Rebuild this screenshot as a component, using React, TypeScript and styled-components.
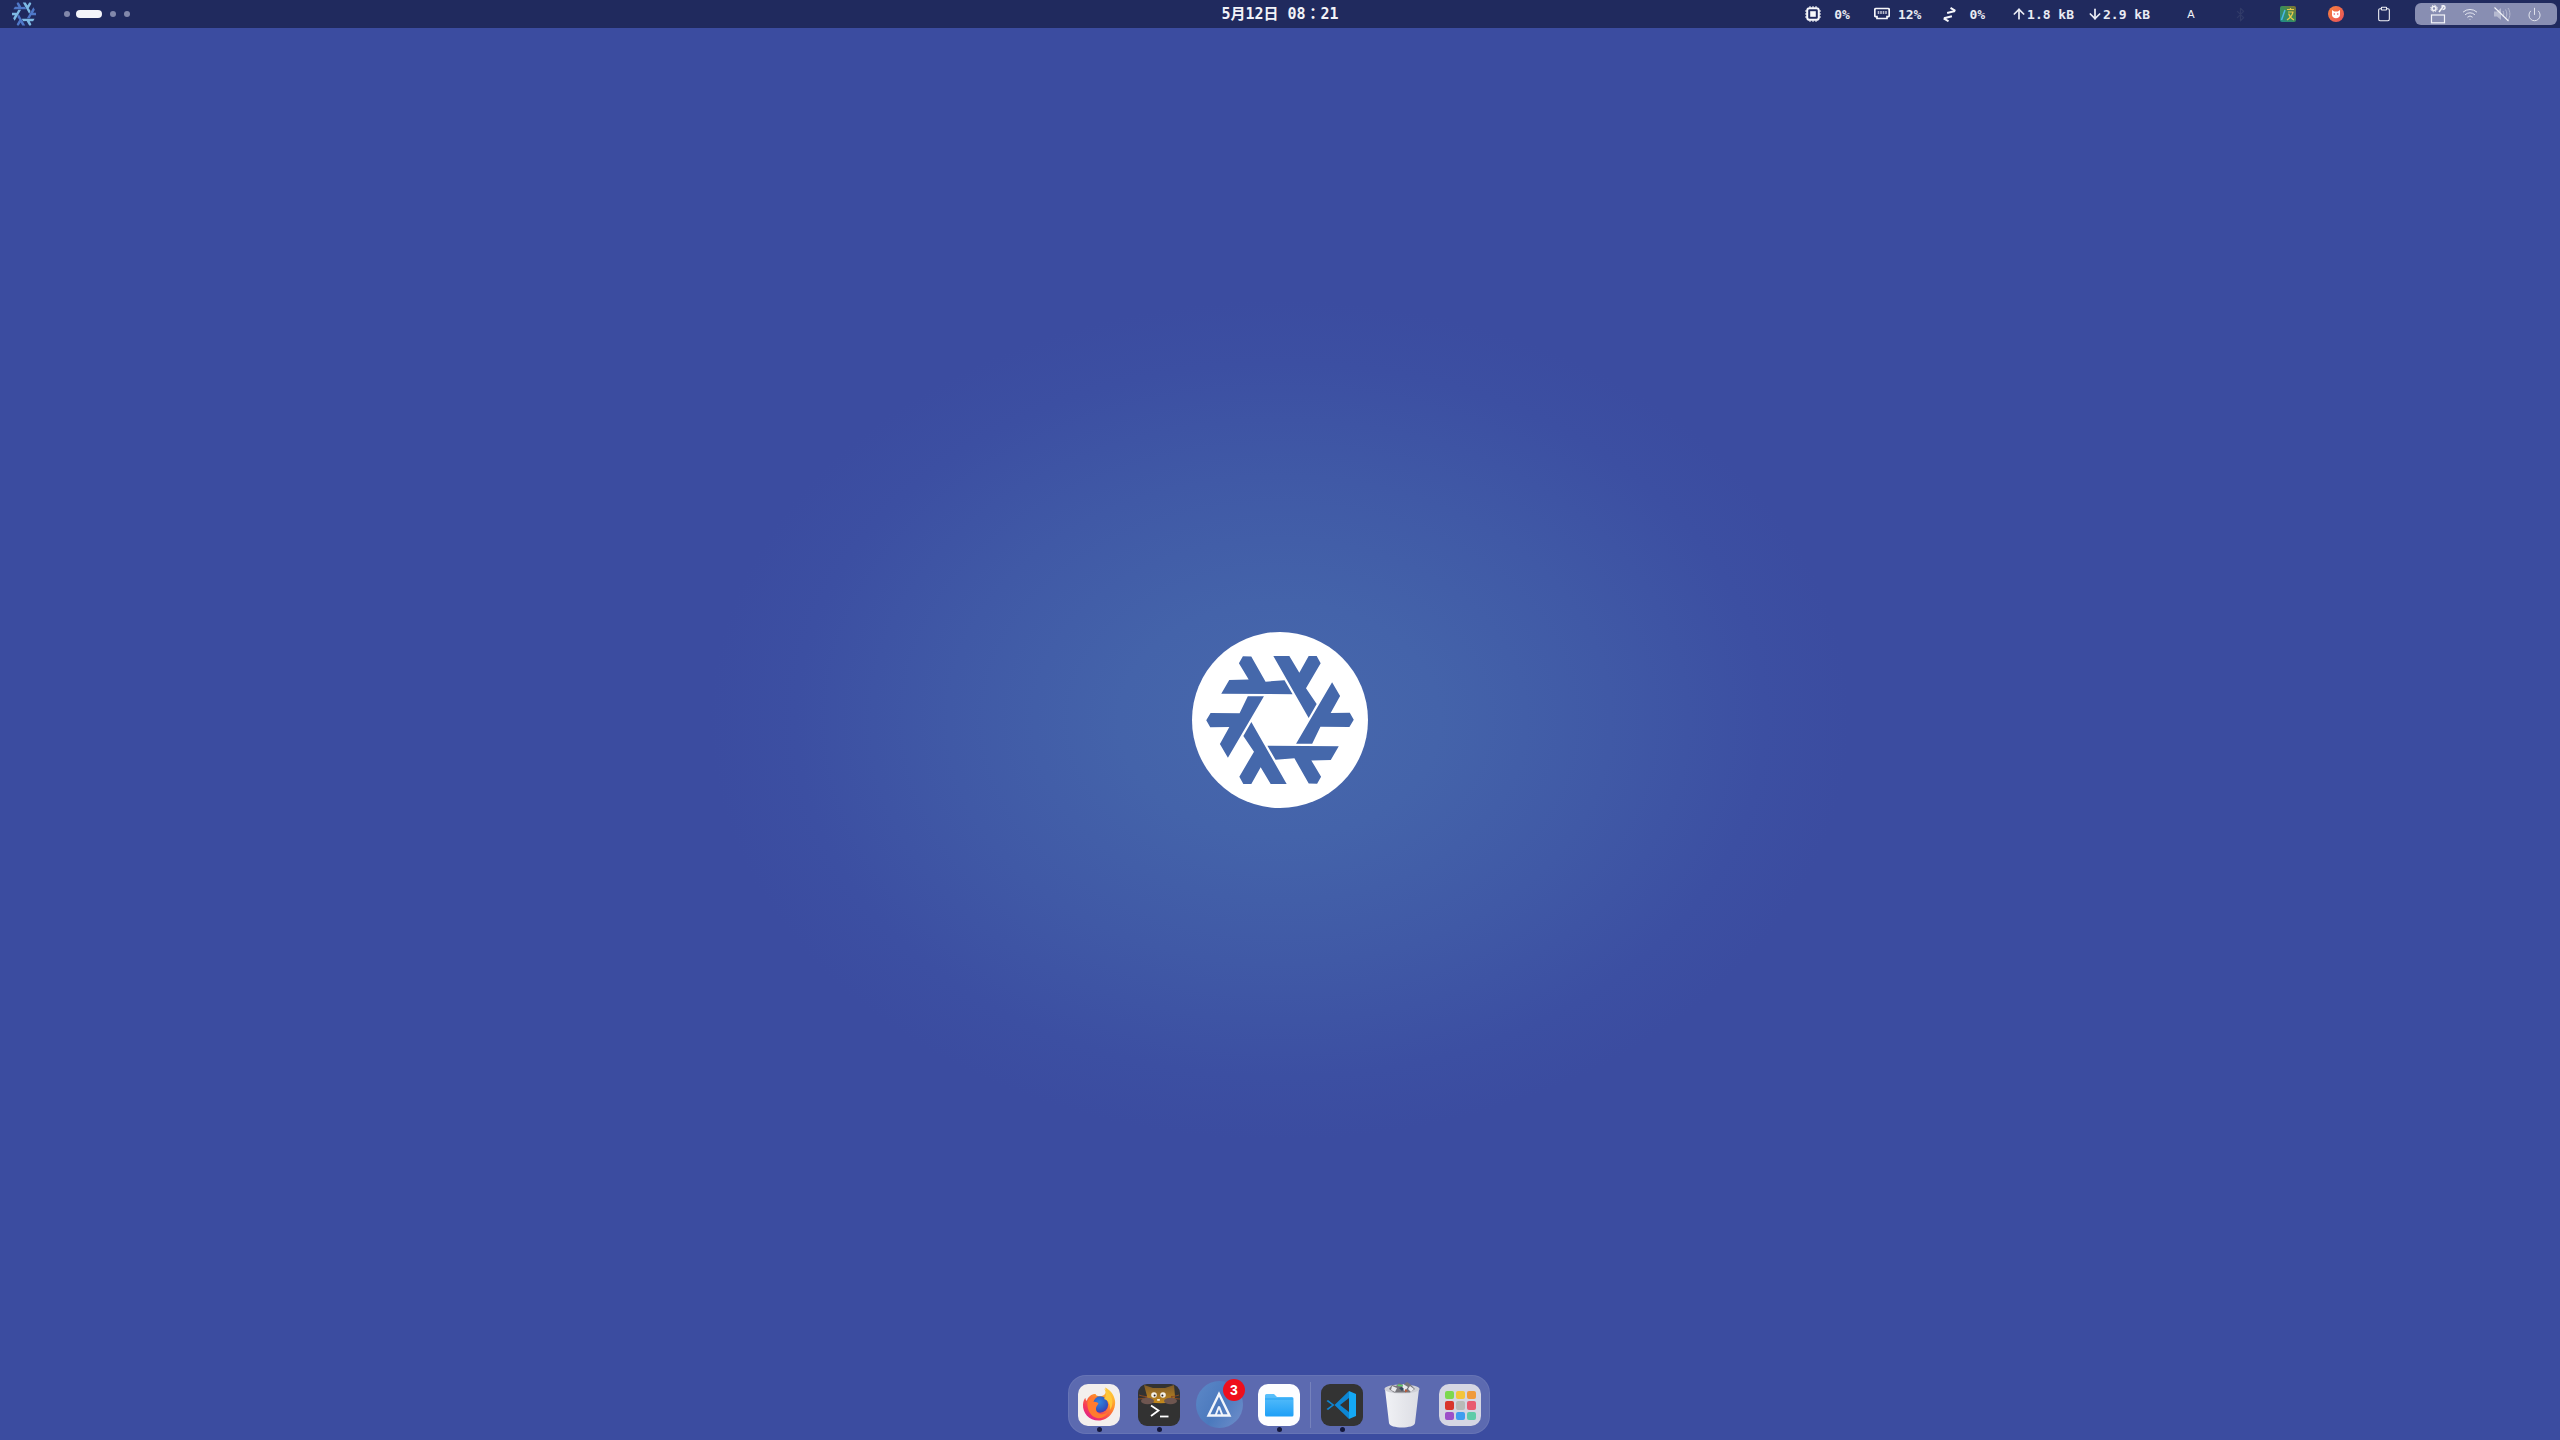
// App.tsx
import styled, { createGlobalStyle } from "styled-components";
import { ArrowDown, ArrowUp, Bluetooth, Clipboard, Power, Wifi } from "lucide-react";

/* --------------------------------------------------------
   SHARED SHAPES
-------------------------------------------------------- */
const LAMBDA =
  "-20,-192 28,-192 58,-142 86,-192 110,-192 122,-170 78,-95 110,-48 86,-6";
const ANGLES = [0, 60, 120, 180, 240, 300];

function Snowflake({ fill }: { fill: string }) {
  return (
    <>
      {ANGLES.map((a) => (
        <polygon key={a} points={LAMBDA} fill={fill} transform={`rotate(${a})`} />
      ))}
    </>
  );
}

/* --------------------------------------------------------
   STYLES
-------------------------------------------------------- */
const GlobalStyle = createGlobalStyle`
  html, body { margin: 0; padding: 0; height: 100%; overflow: hidden; }
  #root { height: 100%; }
`;

const Desktop = styled.div`
  width: 2560px;
  height: 1440px;
  display: flex;
  flex-direction: column;
  background:
    radial-gradient(ellipse 570px 420px at 50% 50%, #4768ac 0%, #4463aa 28%, #4059a6 58%, #3c4fa2 85%, #3b4ca0 100%),
    #3b4ca0;
  font-family: "DejaVu Sans Mono", "Liberation Mono", "Noto Sans CJK JP", monospace;
`;

const TopBar = styled.header`
  height: 28px;
  flex: none;
  display: grid;
  grid-template-columns: 1fr auto 1fr;
  align-items: center;
  background: #202a5e;
  color: #f2f3f8;
`;

const LeftGroup = styled.div`
  display: flex;
  align-items: center;
  padding-left: 12px;
`;

const Workspaces = styled.div`
  display: flex;
  align-items: center;
  gap: 7px;
  margin-left: 27px;
`;

const Workspace = styled.span<{ $active?: boolean }>`
  width: ${(p) => (p.$active ? "26px" : "6px")};
  height: ${(p) => (p.$active ? "8px" : "6px")};
  border-radius: 4px;
  background: ${(p) => (p.$active ? "#f4f5fa" : "#8288ab")};
  margin: ${(p) => (p.$active ? "0 0 0 -1px" : "0 0 0 1px")};
`;

const Clock = styled.div`
  font-size: 15px;
  font-weight: 700;
  white-space: nowrap;
  margin-top: -3px;
`;

const RightGroup = styled.div`
  display: flex;
  align-items: center;
  justify-content: flex-end;
  padding-right: 3px;
`;

const Stat = styled.div<{ $gap: number; $after: number }>`
  display: flex;
  align-items: center;
  gap: ${(p) => p.$gap}px;
  margin-right: ${(p) => p.$after}px;
  font-size: 13px;
  font-weight: 700;
  white-space: nowrap;
  color: #e9ebf3;
`;

const Tray = styled.div<{ $width: number; $dim?: boolean }>`
  width: ${(p) => p.$width}px;
  height: 28px;
  display: flex;
  align-items: center;
  justify-content: center;
  font-family: "Liberation Sans", sans-serif;
  font-size: 11px;
  font-weight: 400;
  color: ${(p) => (p.$dim ? "#303a68" : "#f2f3f8")};
`;

const QuickPill = styled.div`
  width: 142px;
  height: 22px;
  box-sizing: border-box;
  padding-left: 7px;
  display: grid;
  grid-template-columns: repeat(4, 32px);
  justify-items: center;
  align-items: center;
  border-radius: 6px;
  background: #888eb2;
  color: #eceef5;
`;

const Main = styled.main`
  flex: 1;
  min-height: 0;
  display: flex;
  align-items: center;
  justify-content: center;
  padding-top: 37px;
`;

const LogoSvg = styled.svg`
  width: 176px;
  height: 176px;
  display: block;
`;

const DockRow = styled.footer`
  flex: none;
  display: flex;
  justify-content: center;
  padding: 0 2px 6px 0;
`;

const Dock = styled.nav`
  height: 59px;
  box-sizing: border-box;
  display: flex;
  align-items: center;
  border-radius: 18px;
  background: rgba(255, 255, 255, 0.17);
  border: 1px solid rgba(255, 255, 255, 0.07);
`;

const Slot = styled.div<{ $width?: number }>`
  position: relative;
  width: ${(p) => p.$width ?? 60}px;
  height: 100%;
  display: flex;
  align-items: center;
  justify-content: center;
`;

const RunDot = styled.span`
  position: absolute;
  left: 50%;
  bottom: 1px;
  width: 5px;
  height: 5px;
  margin-left: -2.5px;
  border-radius: 50%;
  background: #14183c;
`;

const Badge = styled.span`
  position: absolute;
  top: 3px;
  right: 4px;
  width: 22px;
  height: 22px;
  display: flex;
  align-items: center;
  justify-content: center;
  border-radius: 50%;
  background: #ee0f1c;
  color: #fff;
  font-family: "Liberation Sans", sans-serif;
  font-size: 14px;
  font-weight: 700;
`;

const Separator = styled.span`
  width: 1px;
  height: 46px;
  margin: 0 1px;
  background: rgba(255, 255, 255, 0.16);
`;

const AppSvg = styled.svg`
  display: block;
`;

const LaunchTile = styled.div`
  width: 42px;
  height: 42px;
  box-sizing: border-box;
  padding: 7px 6px;
  display: grid;
  grid-template-columns: repeat(3, 9px);
  grid-auto-rows: 8.5px;
  gap: 2px;
  justify-content: center;
  border-radius: 10px;
  background: #d5d6e3;
`;

const LaunchCell = styled.span<{ $color: string }>`
  border-radius: 2px;
  background: ${(p) => p.$color};
`;

/* --------------------------------------------------------
   TOP BAR ICONS
-------------------------------------------------------- */
function CpuIcon() {
  return (
    <svg width="16" height="16" viewBox="0 0 16 16" fill="none">
      <rect x="2.2" y="2.2" width="11.6" height="11.6" rx="2.4" stroke="#f6f7fb" strokeWidth="2" />
      <rect x="5.2" y="5.2" width="5.6" height="5.6" fill="#f6f7fb" />
      <path d="M5 0v2M8 0v2M11 0v2M5 14v2M8 14v2M11 14v2M0 5h2M0 8h2M0 11h2M14 5h2M14 8h2M14 11h2" stroke="#f6f7fb" />
    </svg>
  );
}

function MemIcon() {
  return (
    <svg width="16" height="14" viewBox="0 0 16 14" fill="none">
      <path d="M2 1.5h12a1.2 1.2 0 0 1 1.2 1.2v6a1 1 0 0 1-1 1H13v1.8H3V9.7H1.8a1 1 0 0 1-1-1v-6A1.2 1.2 0 0 1 2 1.5z" stroke="#f6f7fb" strokeWidth="1.7" />
      <path d="M4.5 4v3M7 4v3M9.5 4v3M12 4v3" stroke="#f6f7fb" strokeWidth="1.6" opacity="0.7" />
    </svg>
  );
}

function SwapIcon() {
  return (
    <svg width="15" height="15" viewBox="0 0 15 15" fill="none" stroke="#f6f7fb" strokeWidth="2">
      <path d="M5 5.2h8.2M9.5 1.2l4 4" transform="rotate(-14 8 5)" />
      <path d="M10 10H1.8M5.5 14l-4-4" transform="rotate(-14 7 10)" />
    </svg>
  );
}

function TranslateIcon() {
  return (
    <svg width="16" height="16" viewBox="0 0 16 16">
      <defs>
        <linearGradient id="tr" x1="0" y1="1" x2="1" y2="0">
          <stop offset="0" stopColor="#1f8a8c" />
          <stop offset="0.55" stopColor="#3e8c55" />
          <stop offset="1" stopColor="#87702c" />
        </linearGradient>
      </defs>
      <rect width="16" height="16" rx="2" fill="url(#tr)" />
      <path d="M7 3.5h7M10.5 2v1.5M8 6h5.5M13 6c-.8 3.5-3 6-6 8M8.6 7.5c.9 3 2.6 5 5.4 6.5" stroke="#e8c84a" strokeWidth="1.2" fill="none" />
      <path d="M1.5 14l3.5-10" stroke="#4bb8e8" strokeWidth="1.5" />
    </svg>
  );
}

function CatIcon() {
  return (
    <svg width="16" height="16" viewBox="0 0 16 16">
      <defs>
        <linearGradient id="cat" x1="0" y1="0" x2="1" y2="1">
          <stop offset="0" stopColor="#f6823c" />
          <stop offset="1" stopColor="#e8505c" />
        </linearGradient>
      </defs>
      <circle cx="8" cy="8" r="8" fill="url(#cat)" />
      <path d="M4 4l2.2 1.5h3.6L12 4v5c0 2-1.8 3.2-4 3.2S4 11 4 9z" fill="#fff" />
      <circle cx="6.3" cy="8" r="0.8" fill="#e8505c" />
      <circle cx="9.7" cy="8" r="0.8" fill="#e8505c" />
    </svg>
  );
}

function SettingsTrayIcon() {
  return (
    <svg width="16" height="20" viewBox="0 0 16 20" fill="none" stroke="#f2f3f8">
      <circle cx="4" cy="4.5" r="2" strokeWidth="1.6" />
      <circle cx="4" cy="4.5" r="3.3" strokeWidth="1" strokeDasharray="1.3 1.3" />
      <path d="M9 8l4.500-6" strokeWidth="1.500" />
      <path d="M11.500 2.500c1-1.500 3.500-1 3.500 1 0 1.500-1.500 2-2.500 2" strokeWidth="1.400" />
      <rect x="1.500" y="11" width="13" height="7.800" strokeWidth="1.200" />
    </svg>
  );
}

function MutedIcon() {
  return (
    <svg width="18" height="16" viewBox="0 0 18 16" fill="none">
      <path d="M1 5.5h3L8 2v12l-4-3.500H1z" fill="#b6bad0" />
      <path d="M10 5c1 1.800 1 4.200 0 6M12.500 3.500c1.800 2.800 1.800 6.200 0 9M15 2c2.500 3.600 2.500 8.400 0 12" stroke="#b6bad0" strokeWidth="1" />
      <path d="M1.500 1.500L15.500 15" stroke="#f2f3f8" strokeWidth="1.100" />
    </svg>
  );
}

/* --------------------------------------------------------
   DOCK ICONS
-------------------------------------------------------- */
function FirefoxIcon() {
  return (
    <AppSvg width="42" height="42" viewBox="0 0 42 42">
      <defs>
        <linearGradient id="ffBody" x1="0.85" y1="0.05" x2="0.2" y2="0.95">
          <stop offset="0" stopColor="#ffd23a" />
          <stop offset="0.4" stopColor="#ff8a2b" />
          <stop offset="0.8" stopColor="#f5365c" />
          <stop offset="1" stopColor="#e0218a" />
        </linearGradient>
        <radialGradient id="ffGlobe" cx="0.45" cy="0.35" r="0.7">
          <stop offset="0" stopColor="#2f86e0" />
          <stop offset="0.7" stopColor="#2f56c0" />
          <stop offset="1" stopColor="#5a2ca8" />
        </radialGradient>
      </defs>
      <rect width="42" height="42" rx="10" fill="#f3efed" />
      <path d="M27 3.500c4.500 2 9 6.500 10 13 1.300 9.500-6 20-16.500 20C11 36.500 4.500 29 5 20.500c.2-2.800 1-5 2.300-6.800.2 1.500.7 2.600 1.500 3.300C10 12.500 13.500 9.800 18 10c-1 1 .5 1.500 2 2 6 1.500 9.500-3 7-8.500z" fill="url(#ffBody)" />
      <circle cx="22" cy="20.500" r="8.200" fill="url(#ffGlobe)" />
      <path d="M9.500 17c2.500-3 6-4.500 10-4-2 1-3.300 2.500-4 5 1.800-.5 4 .2 5 1.800-2.300 2.200-3.700 5.800-1 8.700 3 3 8.500 2 11-1.500-1.500 5-6.500 8-11.500 7-6-1.200-10.500-7.500-9.500-17z" fill="#ff7b2e" />
      <path d="M26 4.500c4.500 3 8.500 7.500 8.500 13.500 0 3-1 6-2.500 8 .5-4-.5-9.500-6-11 3-3 2.500-7 0-10.500z" fill="#ffc93a" />
    </AppSvg>
  );
}

function TerminalIcon() {
  return (
    <AppSvg width="42" height="42" viewBox="0 0 42 42">
      <defs>
        <linearGradient id="catHead" x1="0" y1="0" x2="0" y2="1">
          <stop offset="0" stopColor="#7c5a2a" />
          <stop offset="1" stopColor="#c68a1c" />
        </linearGradient>
      </defs>
      <rect width="42" height="42" rx="9" fill="#323232" />
      <path d="M6 1l9 3h12l9-3 1 11c0 3-2 6-4 6.500-7 1-13 1-20 0-2-.5-4-3.500-4-6.500z" fill="url(#catHead)" />
      <path d="M1 11c3 1 5 1.500 8 1.500M-1 15c3 0 7-.5 10-1.500M41 11c-3 1-5 1.500-8 1.500M43 15c-3 0-7-.5-10-1.500" stroke="#8a4a22" strokeWidth="1" fill="none" />
      <ellipse cx="9.500" cy="17" rx="6.500" ry="3.200" fill="#6e5650" />
      <ellipse cx="32.500" cy="17" rx="6.500" ry="3.200" fill="#6e5650" />
      <circle cx="16" cy="11" r="2.800" fill="#f5f1e8" />
      <circle cx="25" cy="11" r="2.800" fill="#f5f1e8" />
      <circle cx="16.600" cy="11.500" r="1" fill="#2a2020" />
      <circle cx="24.400" cy="11.500" r="1" fill="#2a2020" />
      <rect x="19" y="15" width="3" height="1.800" rx="0.8" fill="#f5f1e8" />
      <path d="M13 21.500l7.500 5-7.500 5.500" stroke="#fff" strokeWidth="1.800" fill="none" />
      <path d="M22 32.500h8.500" stroke="#fff" strokeWidth="1.800" />
    </AppSvg>
  );
}

function StoreIcon() {
  return (
    <AppSvg width="47" height="47" viewBox="0 0 47 47">
      <defs>
        <linearGradient id="store" x1="0" y1="0.2" x2="1" y2="0.8">
          <stop offset="0" stopColor="#5a86c6" />
          <stop offset="0.5" stopColor="#4b79bd" />
          <stop offset="1" stopColor="#6b8cc9" />
        </linearGradient>
      </defs>
      <circle cx="23.500" cy="23.500" r="23.500" fill="url(#store)" />
      <path d="M23 13L12.500 34.500h21z" fill="none" stroke="#f2f5fb" strokeWidth="2.400" />
      <path d="M23 25.500L19.500 34.500M23 25.500L26.500 34.500" fill="none" stroke="#f2f5fb" strokeWidth="2" />
    </AppSvg>
  );
}

function FilesIcon() {
  return (
    <AppSvg width="42" height="42" viewBox="0 0 42 42">
      <defs>
        <linearGradient id="folder" x1="0" y1="0" x2="0" y2="1">
          <stop offset="0" stopColor="#5cc0fb" />
          <stop offset="1" stopColor="#1e9ff6" />
        </linearGradient>
      </defs>
      <rect width="42" height="42" rx="10" fill="#fdfdff" />
      <path d="M7 11.500a1.500 1.500 0 0 1 1.500-1.500h7.500l3 3h15a1.500 1.500 0 0 1 1.500 1.500V31a1.500 1.500 0 0 1-1.500 1.500H8.500A1.500 1.500 0 0 1 7 31z" fill="url(#folder)" />
      <path d="M7 15h28" stroke="#2ca6f3" strokeWidth="1.200" />
    </AppSvg>
  );
}

function VscodeIcon() {
  return (
    <AppSvg width="42" height="42" viewBox="0 0 42 42">
      <rect width="42" height="42" rx="9" fill="#333333" />
      <path d="M28 7l7 3v22l-7 3z" fill="#14a8f4" />
      <path d="M28 7L13.500 21 7 16l-1.500 1 5.500 4-5.500 4 1.500 1 6.500-5L28 35V28L19 21l9-7z" fill="#0d86d3" />
    </AppSvg>
  );
}

function TrashIcon() {
  return (
    <AppSvg width="36" height="46" viewBox="0 0 36 46">
      <defs>
        <linearGradient id="bin" x1="0" y1="0" x2="1" y2="0">
          <stop offset="0" stopColor="#f1f2f6" />
          <stop offset="0.5" stopColor="#e6e7ec" />
          <stop offset="1" stopColor="#dcdde4" />
        </linearGradient>
      </defs>
      <path d="M1 7l4 34c.3 3 6.500 4.500 13 4.500S30.700 44 31 41l4-34z" fill="url(#bin)" />
      <ellipse cx="18" cy="7" rx="17.500" ry="4.500" fill="#cfd0d7" />
      <path d="M5 7l3-4 4 1 3-3 4 2 4-3 3 2 5 5-5 3.500H10z" fill="#77767b" />
      <path d="M8 4l5 2-2 4-4-2zM19 2l5 3-3 4-3-2zM26 4l4 3-3 3-3-3z" fill="#e8e8ec" />
      <path d="M14 2.500l5 .5-.5 1.500-5-.5z" fill="#5fd06a" />
      <path d="M15 6l3 3 2-2-2-2z" fill="#34495e" />
      <path d="M21 7l3 2-3 1.500z" fill="#b85a3a" />
    </AppSvg>
  );
}

const LAUNCH_COLORS = [
  "#7cd850", "#f3c53c", "#f09a3c",
  "#d8352c", "#b8bbb8", "#e85a70",
  "#9c50c8", "#3f9df0", "#5fcba8",
];

/* --------------------------------------------------------
   PAGE
-------------------------------------------------------- */
export default function App() {
  return (
    <Desktop>
      <GlobalStyle />

      <TopBar>
        <LeftGroup>
          <svg width="24" height="24" viewBox="-200 -200 400 400">
            {ANGLES.map((a, i) => (
              <polygon
                key={a}
                points={LAMBDA}
                fill={i % 2 === 0 ? "#7ebae4" : "#4f78c8"}
                transform={`rotate(${a})`}
              />
            ))}
          </svg>
          <Workspaces>
            <Workspace />
            <Workspace $active />
            <Workspace />
            <Workspace />
          </Workspaces>
        </LeftGroup>

        <Clock>5月12日 08：21</Clock>

        <RightGroup>
          <Stat $gap={13} $after={24}><CpuIcon />0%</Stat>
          <Stat $gap={8} $after={21}><MemIcon />12%</Stat>
          <Stat $gap={12} $after={26}><SwapIcon />0%</Stat>
          <Stat $gap={0} $after={13}><ArrowUp size={16} strokeWidth={2.6} />1.8 kB</Stat>
          <Stat $gap={0} $after={16}><ArrowDown size={16} strokeWidth={2.6} />2.9 kB</Stat>
          <Tray $width={50}>A</Tray>
          <Tray $width={48} $dim><Bluetooth size={15} /></Tray>
          <Tray $width={48}><TranslateIcon /></Tray>
          <Tray $width={48}><CatIcon /></Tray>
          <Tray $width={48}><Clipboard size={16} strokeWidth={1.6} /></Tray>
          <Tray $width={7} />
          <QuickPill>
            <SettingsTrayIcon />
            <Wifi size={16} strokeWidth={1.4} />
            <MutedIcon />
            <Power size={15} strokeWidth={1.4} />
          </QuickPill>
        </RightGroup>
      </TopBar>

      <Main>
        <LogoSvg viewBox="-264 -264 528 528">
          <circle r="264" fill="#ffffff" />
          <Snowflake fill="#4568ab" />
        </LogoSvg>
      </Main>

      <DockRow>
        <Dock>
          <Slot><FirefoxIcon /><RunDot /></Slot>
          <Slot><TerminalIcon /><RunDot /></Slot>
          <Slot><StoreIcon /><Badge>3</Badge></Slot>
          <Slot><FilesIcon /><RunDot /></Slot>
          <Separator />
          <Slot><VscodeIcon /><RunDot /></Slot>
          <Slot $width={59}><TrashIcon /></Slot>
          <Slot $width={58}>
            <LaunchTile>
              {LAUNCH_COLORS.map((c) => <LaunchCell key={c} $color={c} />)}
            </LaunchTile>
          </Slot>
        </Dock>
      </DockRow>
    </Desktop>
  );
}
